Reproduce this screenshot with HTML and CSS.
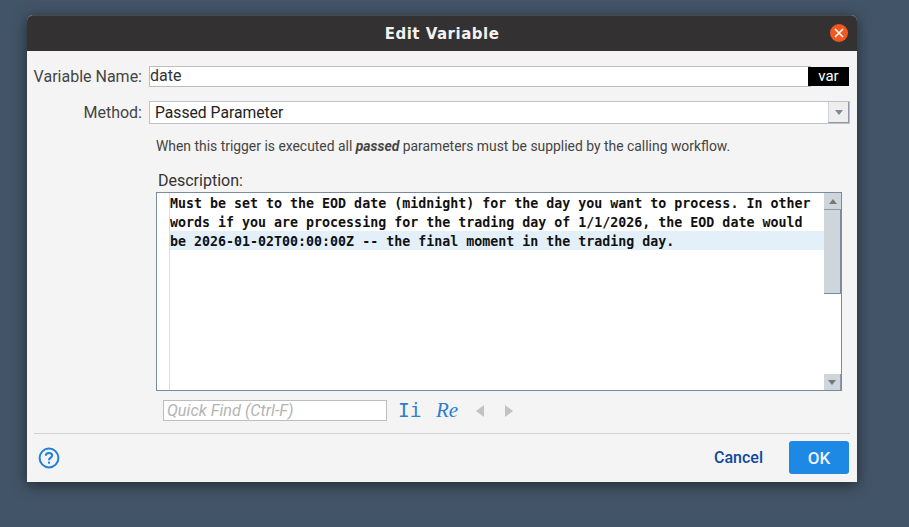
FILE: index.html
```html
<!DOCTYPE html>
<html lang="en">
<head>
    <meta charset="UTF-8">
    <title>Edit Variable</title>
    <link rel="stylesheet" href="styles.css">
</head>
<body>
    <div class="dialog">
        <div class="titlebar">
            <span class="title">Edit Variable</span>
            <button class="close-btn">
                <svg width="10" height="10" viewBox="0 0 10 10"><path d="M1 1L9 9M9 1L1 9" stroke="#fff" stroke-width="1.5" fill="none"/></svg>
            </button>
        </div>
        <div class="dialog-body">
            <div class="form-row name-row">
                <label class="field-label">Variable Name:</label>
                <div class="name-input">date</div>
                <span class="var-tag">var</span>
            </div>
            <div class="form-row method-row">
                <label class="field-label">Method:</label>
                <div class="method-select">
                    <span class="method-value">Passed Parameter</span>
                    <span class="select-btn"><span class="arrow-down"></span></span>
                </div>
            </div>
            <p class="hint">When this trigger is executed all <b><i>passed</i></b> parameters must be supplied by the calling workflow.</p>
            <div class="desc-label">Description:</div>
            <div class="editor">
                <div class="gutter"></div>
                <div class="editor-text">
                    <div class="code-line">Must be set to the EOD date (midnight) for the day you want to process. In other</div>
                    <div class="code-line">words if you are processing for the trading day of 1/1/2026, the EOD date would</div>
                    <div class="code-line current">be 2026-01-02T00:00:00Z -- the final moment in the trading day.</div>
                </div>
                <div class="scrollbar">
                    <span class="scroll-btn"><span class="arrow-up"></span></span>
                    <span class="scroll-thumb"></span>
                    <span class="scroll-track"></span>
                    <span class="scroll-btn bottom"><span class="arrow-down small"></span></span>
                </div>
            </div>
            <div class="find-row">
                <div class="find-input">Quick Find (Ctrl-F)</div>
                <span class="find-case">Ii</span>
                <span class="find-regex">Re</span>
                <span class="nav-left"></span>
                <span class="nav-right"></span>
            </div>
        </div>
        <div class="footer">
            <svg class="help-icon" width="22" height="22" viewBox="0 0 22 22">
                <circle cx="11" cy="11" r="9.4" fill="none" stroke="#1e7fdc" stroke-width="2"/>
                <path d="M7.8 8.8C7.8 6.9 9.2 5.9 11 5.9C12.8 5.9 14.2 7 14.2 8.6C14.2 10.6 11 10.8 11 13.2" fill="none" stroke="#1e7fdc" stroke-width="2"/>
                <rect x="10" y="14.6" width="2" height="2" fill="#1e7fdc"/>
            </svg>
            <button class="cancel-btn">Cancel</button>
            <button class="ok-btn">OK</button>
        </div>
    </div>
</body>
</html>
```

FILE: styles.css
```css
html, body {
    height: 100%;
}
body {
    margin: 0;
    padding: 15px 52px 0 27px;
    box-sizing: border-box;
    background-color: #425467;
    font-family: Roboto, sans-serif;
    overflow: hidden;
}
.dialog {
    height: 467px;
    background-color: #f4f4f4;
    border-radius: 6px 6px 0 0;
    box-shadow: 0 3px 14px rgba(0, 0, 0, 0.5);
    display: flex;
    flex-direction: column;
}
.titlebar {
    height: 36px;
    flex-shrink: 0;
    background-color: #333132;
    border-top: 1px solid #47484a;
    box-sizing: border-box;
    border-radius: 6px 6px 0 0;
    display: flex;
    align-items: center;
    justify-content: center;
    position: relative;
}
.title {
    color: #f2f2f2;
    font-family: "DejaVu Sans", sans-serif;
    font-size: 15px;
    font-weight: 700;
    letter-spacing: 0.5px;
}
.close-btn {
    position: absolute;
    right: 9px;
    top: 8px;
    width: 18px;
    height: 18px;
    border: none;
    padding: 0;
    border-radius: 50%;
    background-color: #f0591f;
    display: flex;
    align-items: center;
    justify-content: center;
}
.dialog-body {
    height: 382px;
    flex-shrink: 0;
    box-sizing: border-box;
    padding-top: 15px;
}
.form-row {
    display: flex;
    align-items: center;
}
.field-label {
    width: 115px;
    flex-shrink: 0;
    text-align: right;
    font-size: 16px;
    color: #444;
}
.name-row {
    height: 21px;
}
.name-input {
    margin-left: 7px;
    width: 662px;
    height: 21px;
    box-sizing: border-box;
    background: #fff;
    border: 1px solid #bdbdbd;
    font-size: 16px;
    line-height: 18px;
    padding-left: 0;
    color: #333;
}
.var-tag {
    margin-left: -3px;
    width: 41px;
    height: 19px;
    background: #000;
    color: #fff;
    font-size: 15px;
    line-height: 19px;
    text-align: center;
    position: relative;
}
.method-row {
    height: 23px;
    margin-top: 14px;
}
.method-select {
    margin-left: 7px;
    width: 701px;
    height: 23px;
    box-sizing: border-box;
    background: #fff;
    border: 1px solid #bdc0c4;
    display: flex;
    align-items: center;
    justify-content: space-between;
}
.method-value {
    padding-left: 5px;
    font-size: 15.7px;
    color: #222;
}
.select-btn {
    width: 21px;
    height: 21px;
    box-sizing: border-box;
    background: #eeeeee;
    border-left: 1px solid #cfd3d8;
    border-right: 1px solid #8d99a8;
    border-bottom: 1px solid #8d99a8;
    display: flex;
    align-items: center;
    justify-content: center;
}
.arrow-down {
    width: 0;
    height: 0;
    border-left: 4px solid transparent;
    border-right: 4px solid transparent;
    border-top: 5px solid #7c8a9c;
}
.arrow-down.small {
    border-top-color: #777;
}
.arrow-up {
    width: 0;
    height: 0;
    border-left: 4px solid transparent;
    border-right: 4px solid transparent;
    border-bottom: 5px solid #777;
}
.hint {
    margin: 13px 0 0 129px;
    height: 18px;
    font-size: 13.9px;
    line-height: 18px;
    color: #444;
}
.desc-label {
    margin: 17px 0 0 131px;
    height: 18px;
    font-size: 16px;
    line-height: 18px;
    color: #333;
}
.editor {
    margin: 2px 0 0 129px;
    width: 686px;
    height: 199px;
    box-sizing: border-box;
    background: #fff;
    border: 1px solid #7a8ba0;
    display: flex;
}
.gutter {
    width: 12px;
    flex-shrink: 0;
    border-right: 1px solid #dcdcdc;
}
.editor-text {
    flex-grow: 1;
}
.code-line {
    height: 19px;
    box-sizing: border-box;
    padding-top: 1px;
    line-height: 19px;
    font-family: "DejaVu Sans Mono", monospace;
    font-size: 13.3px;
    font-weight: 700;
    color: #111;
    white-space: pre;
}
.code-line.current {
    background-color: #e3f0fa;
}
.scrollbar {
    width: 17px;
    flex-shrink: 0;
    display: flex;
    flex-direction: column;
    background: #fff;
}
.scroll-btn {
    height: 16px;
    flex-shrink: 0;
    background: #ced6dc;
    border-bottom: 1px solid #8d99a8;
    display: flex;
    align-items: center;
    justify-content: center;
}
.scroll-btn.bottom {
    border-bottom: none;
    border-right: 1px solid #8d99a8;
}
.scroll-thumb {
    height: 84px;
    flex-shrink: 0;
    box-sizing: border-box;
    background: #ced6dc;
    border-right: 1px solid #7a8ba0;
    border-bottom: 1px solid #7a8ba0;
}
.scroll-track {
    flex-grow: 1;
}
.find-row {
    margin: 9px 0 0 136px;
    height: 21px;
    display: flex;
    align-items: center;
}
.find-input {
    width: 224px;
    height: 21px;
    box-sizing: border-box;
    border: 1px solid #bdbdbd;
    background: #fff;
    font-size: 16.3px;
    font-style: italic;
    line-height: 19px;
    padding-left: 3px;
    color: #b4b4b4;
}
.find-case {
    margin-left: 11px;
    width: 22px;
    font-family: "DejaVu Sans Mono", monospace;
    font-size: 19.5px;
    color: #2a7fd5;
}
.find-regex {
    margin-left: 16px;
    width: 22px;
    font-family: "Liberation Serif", serif;
    font-size: 21px;
    font-style: italic;
    color: #2a7fd5;
}
.nav-left {
    margin-left: 18px;
    width: 0;
    height: 0;
    border-top: 6px solid transparent;
    border-bottom: 6px solid transparent;
    border-right: 8px solid #c2c2c2;
}
.nav-right {
    margin-left: 21px;
    width: 0;
    height: 0;
    border-top: 6px solid transparent;
    border-bottom: 6px solid transparent;
    border-left: 8px solid #c2c2c2;
}
.footer {
    margin: 0 7px;
    flex-grow: 1;
    border-top: 1px solid #d2d2d2;
    display: flex;
    align-items: center;
    padding-bottom: 1px;
}
.help-icon {
    margin-left: 4px;
    margin-right: auto;
}
.cancel-btn {
    border: none;
    background: none;
    padding: 0;
    margin-right: 26px;
    font-family: Roboto, sans-serif;
    font-size: 16px;
    font-weight: 500;
    color: #1048a0;
}
.ok-btn {
    width: 60px;
    height: 33px;
    border: none;
    border-radius: 3px;
    background: #1e88e5;
    margin-right: 1px;
    font-family: Roboto, sans-serif;
    font-size: 17px;
    font-weight: 500;
    color: #eef5fc;
}
```
